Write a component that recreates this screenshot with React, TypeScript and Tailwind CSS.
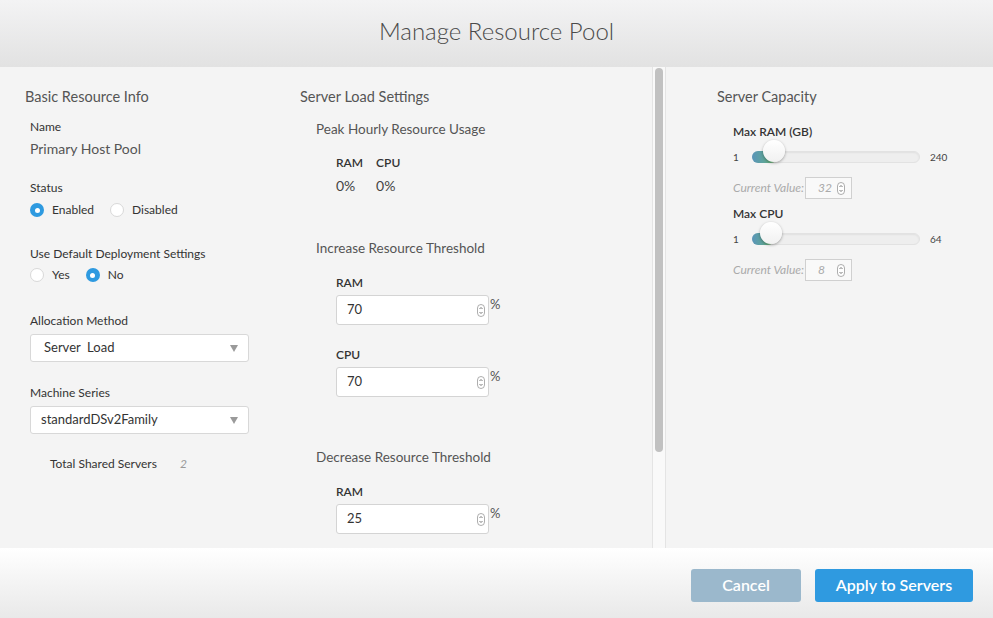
import React from "react";

const font = { fontFamily: "Lato, 'Open Sans', sans-serif" };

function Radio({ checked, label }: { checked: boolean; label: string }) {
  return (
    <div className="flex items-center">
      {checked ? (
        <span className="w-[14px] h-[14px] rounded-full bg-[#2e9ae0] flex items-center justify-center">
          <span className="w-[5px] h-[5px] rounded-full bg-white" />
        </span>
      ) : (
        <span className="w-[14px] h-[14px] rounded-full bg-white border border-[#d8d8d8]" />
      )}
      <span className="ml-[8px] text-[12px] text-[#333]">{label}</span>
    </div>
  );
}

function Spinner() {
  return (
    <svg width="8" height="13" viewBox="0 0 8 13">
      <rect x="0.5" y="0.5" width="7" height="12" rx="3.5" fill="#fff" stroke="#999" strokeWidth="0.8" />
      <path d="M2.5 5 L4 3.5 L5.5 5" fill="none" stroke="#555" strokeWidth="0.8" />
      <path d="M2.5 8 L4 9.5 L5.5 8" fill="none" stroke="#555" strokeWidth="0.8" />
    </svg>
  );
}

function NumInput({ value }: { value: string }) {
  return (
    <div className="flex items-start">
      <div className="w-[153px] h-[30px] bg-white border border-[#d4d4d4] rounded-[3px] flex items-center justify-between pl-[10px] pr-[3px]">
        <span className="text-[13px] text-[#333]">{value}</span>
        <Spinner />
      </div>
      <span className="text-[13px] text-[#555] leading-none mt-[3px] ml-[1px]">%</span>
    </div>
  );
}

function Select({ value, pl }: { value: string; pl: string }) {
  return (
    <div className={`w-[219px] h-[28px] bg-white border border-[#d8d8d8] rounded-[3px] flex items-center justify-between pr-[10px] ${pl}`}>
      <span className="text-[13px] text-[#333] whitespace-pre">{value}</span>
      <svg width="8" height="7" viewBox="0 0 8 7">
        <path d="M0 0 H8 L4 7 Z" fill="#9a9a9a" />
      </svg>
    </div>
  );
}

function Slider({ label, max, fill, cv }: { label: string; max: string; fill: number; cv: string }) {
  return (
    <div className="flex flex-col">
      <div className="text-[12px] text-[#333] font-semibold leading-[14px]">{label}</div>
      <div className="flex items-center mt-[11px] h-[14px]">
        <span className="w-[19px] text-[10px] text-[#444]">1</span>
        <div className="relative w-[168px] h-[12px] rounded-full bg-[#eeeeee] border border-[#e2e2e2] shadow-[inset_0_1px_2px_rgba(0,0,0,0.06)]">
          <div
            className="absolute left-[-1px] top-[-1px] h-[12px] rounded-full bg-linear-to-r from-[#5a94b9] via-[#5fa59a] to-[#72bb5c]"
            style={{ width: fill + 4 }}
          />
          <div
            className="absolute top-[-12px] w-[22px] h-[22px] rounded-full shadow-[0_1px_3px_rgba(0,0,0,0.35)] bg-linear-to-b from-white to-[#f1f1f1]"
            style={{ left: fill - 11 }}
          />
        </div>
        <span className="ml-[10px] text-[10px] text-[#444]">{max}</span>
      </div>
      <div className="flex items-center mt-[13px]">
        <span className="text-[12px] italic text-[#aaa] w-[72px]">Current Value:</span>
        <div className="w-[47px] h-[22px] border border-[#d0d0d0] bg-[#f9f9f9] flex items-center justify-between pl-[12px] pr-[6px]">
          <span className="text-[12px] italic text-[#aaa]">{cv}</span>
          <Spinner />
        </div>
      </div>
    </div>
  );
}

export default function App() {
  return (
    <div style={font} className="w-[993px] h-[618px] flex flex-col overflow-hidden bg-[#f4f4f4]">
      {/* Header */}
      <div className="h-[67px] shrink-0 bg-linear-to-b from-[#f3f3f4] to-[#e2e2e2] flex items-center justify-center pb-[5px]">
        <h1 className="text-[24px] font-light text-[#4a4a4a]">Manage Resource Pool</h1>
      </div>

      {/* Body */}
      <div className="h-[481px] shrink-0 flex overflow-hidden">
        <div className="w-[652px] flex overflow-hidden">
          {/* Left column */}
          <div className="w-[275px] shrink-0 pl-[25px] pt-[21px] flex flex-col">
            <h2 className="text-[14.5px] text-[#555] leading-[18px]">Basic Resource Info</h2>
            <div className="pl-[5px] flex flex-col">
              <div className="mt-[14px] text-[12px] text-[#333] leading-[14px]">Name</div>
              <div className="mt-[6px] text-[14px] text-[#555] leading-[18px]">Primary Host Pool</div>

              <div className="mt-[23px] text-[12px] text-[#333] leading-[14px]">Status</div>
              <div className="mt-[6px] flex gap-[16px]">
                <Radio checked label="Enabled" />
                <Radio checked={false} label="Disabled" />
              </div>

              <div className="mt-[28px] text-[12px] text-[#333] leading-[14px]">Use Default Deployment Settings</div>
              <div className="mt-[5px] flex gap-[16px]">
                <Radio checked={false} label="Yes" />
                <Radio checked label="No" />
              </div>

              <div className="mt-[30px] text-[12px] text-[#333] leading-[14px]">Allocation Method</div>
              <div className="mt-[6px]">
                <Select value={"Server  Load"} pl="pl-[13px]" />
              </div>

              <div className="mt-[24px] text-[12px] text-[#333] leading-[14px]">Machine Series</div>
              <div className="mt-[6px]">
                <Select value={"standardDSv2Family"} pl="pl-[10px]" />
              </div>

              <div className="mt-[21px] pl-[20px] flex items-center">
                <span className="text-[12px] text-[#333]">Total Shared Servers</span>
                <span className="ml-[23px] text-[12px] italic text-[#999]">2</span>
              </div>
            </div>
          </div>

          {/* Middle column */}
          <div className="flex-1 pl-[25px] pt-[21px] flex flex-col">
            <h2 className="text-[14.5px] text-[#555] leading-[18px]">Server Load Settings</h2>
            <div className="pl-[16px] flex flex-col">
              <div className="mt-[14px] text-[13.5px] text-[#555] leading-[18px]">Peak Hourly Resource Usage</div>
              <div className="pl-[20px] mt-[18px] flex gap-[13px]">
                <div className="flex flex-col">
                  <span className="text-[12px] font-semibold text-[#333] leading-[14px]">RAM</span>
                  <span className="mt-[7px] text-[14px] text-[#444] leading-[18px]">0%</span>
                </div>
                <div className="flex flex-col">
                  <span className="text-[12px] font-semibold text-[#333] leading-[14px]">CPU</span>
                  <span className="mt-[7px] text-[14px] text-[#444] leading-[18px]">0%</span>
                </div>
              </div>

              <div className="mt-[44px] text-[13.5px] text-[#555] leading-[18px]">Increase Resource Threshold</div>
              <div className="pl-[20px] flex flex-col">
                <span className="mt-[19px] text-[12px] font-semibold text-[#333] leading-[14px]">RAM</span>
                <div className="mt-[5px]"><NumInput value="70" /></div>
                <span className="mt-[23px] text-[12px] font-semibold text-[#333] leading-[14px]">CPU</span>
                <div className="mt-[5px]"><NumInput value="70" /></div>
              </div>

              <div className="mt-[51px] text-[13.5px] text-[#555] leading-[18px]">Decrease Resource Threshold</div>
              <div className="pl-[20px] flex flex-col">
                <span className="mt-[19px] text-[12px] font-semibold text-[#333] leading-[14px]">RAM</span>
                <div className="mt-[5px]"><NumInput value="25" /></div>
              </div>
            </div>
          </div>
        </div>

        {/* Scrollbar */}
        <div className="w-[14px] shrink-0 bg-[#f9f9f9] border-x border-[#e4e4e4] pt-[1px] flex justify-center">
          <div className="w-[8px] h-[384px] rounded-full bg-[#c1c1c1]" />
        </div>

        {/* Right column */}
        <div className="flex-1 pl-[51px] pt-[21px] flex flex-col">
          <h2 className="text-[14.5px] text-[#555] leading-[18px]">Server Capacity</h2>
          <div className="pl-[16px] mt-[19px] flex flex-col gap-[8px]">
            <Slider label="Max RAM (GB)" max="240" fill={21} cv="32" />
            <Slider label="Max CPU" max="64" fill={18} cv="8" />
          </div>
        </div>
      </div>

      {/* Footer */}
      <div className="h-[70px] shrink-0 bg-linear-to-b from-white to-[#e9e9e9] flex items-center justify-end pr-[20px] gap-[14px] pt-[4px]">
        <button className="w-[110px] h-[33px] rounded-[3px] bg-[#9bb8cc] text-white text-[16px] font-semibold">Cancel</button>
        <button className="w-[158px] h-[33px] rounded-[3px] bg-[#2f9ae0] text-white text-[16px] font-semibold">Apply to Servers</button>
      </div>
    </div>
  );
}
